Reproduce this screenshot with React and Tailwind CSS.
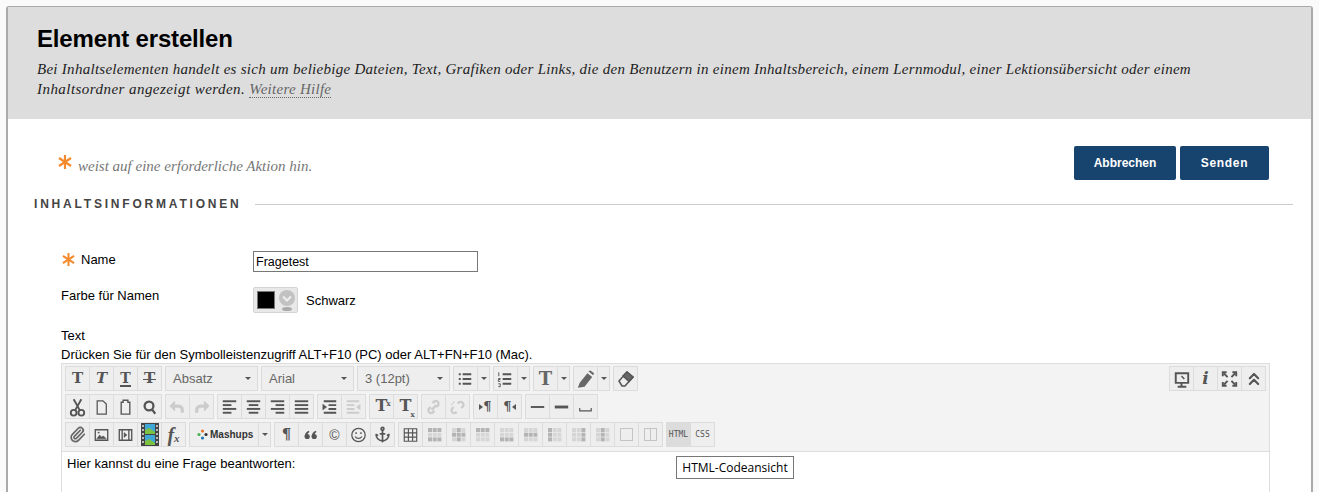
import { Anchor, ChevronsUp, Paperclip } from "lucide-react";

const Svg = ({ children, color = "#555" }) => (
  <svg width="24" height="24" viewBox="0 0 24 24" fill="none" stroke={color} strokeWidth="2">
    {children}
  </svg>
);

const Glyph = ({ children, className = "" }) => (
  <span className={`font-['DejaVu_Serif',serif] font-bold leading-none text-[#555] ${className}`}>{children}</span>
);

const Btn = ({ children, active }) => (
  <div className={`flex h-[23px] w-6 shrink-0 items-center justify-center overflow-hidden border-r border-[#dcdcdc] last:w-[23px] last:border-r-0 ${active ? "bg-[#dcdcdc]" : ""}`}>
    {children}
  </div>
);

const Group = ({ children, className = "" }) => (
  <div className={`flex h-[25px] shrink-0 border border-[#dcdcdc] bg-[#eeeeee] ${className}`}>{children}</div>
);

const Caret = () => <span className="h-0 w-0 border-x-[3px] border-t-[3px] border-x-transparent border-t-[#555]" />;

const CaretBtn = () => (
  <div className="flex w-[11px] items-center justify-center"><Caret /></div>
);

const Select = ({ label }) => (
  <div className="flex h-[25px] w-[93px] shrink-0 items-center justify-between border border-[#dcdcdc] bg-[#eeeeee] pl-[7px] pr-[6px] text-[13px] text-[#666]">
    <span>{label}</span>
    <Caret />
  </div>
);

const Lines = ({ rows, color = "#555" }) => (
  <Svg color={color}>
    {rows.map(([x1, x2, y]) => (
      <line key={y} x1={x1} x2={x2} y1={y} y2={y} />
    ))}
  </Svg>
);

const Star = ({ size }) => (
  <svg width={size} height={size} viewBox="0 0 14 14" stroke="#f58a2c" strokeWidth="2.2" className="shrink-0">
    <line x1="7" y1="0" x2="7" y2="14" />
    <line x1="1" y1="3" x2="13" y2="11" />
    <line x1="13" y1="3" x2="1" y2="11" />
  </svg>
);

const tableVariants = [
  [[0, 0], [0, 1], [0, 2], [2, 0], [2, 1], [2, 2]],
  [[1, 0], [1, 1], [1, 2], [0, 1], [2, 1]],
  [[0, 0], [0, 1], [0, 2]],
  [[2, 0], [2, 1], [2, 2]],
  [[1, 0], [1, 1], [1, 2]],
  [[0, 0], [1, 0], [2, 0]],
  [[0, 2], [1, 2], [2, 2]],
  [[0, 1], [1, 1], [2, 1]],
];

const TableCells = ({ dark }) => (
  <svg width="14" height="14" viewBox="0 0 14 14">
    {[0, 1, 2].map((r) =>
      [0, 1, 2].map((c) => (
        <rect
          key={`${r}${c}`}
          x={c * 4.7}
          y={r * 4.7}
          width="4"
          height="4"
          fill={dark.some(([a, b]) => a === r && b === c) ? "#b4b4b4" : "#d6d6d6"}
        />
      )),
    )}
  </svg>
);

const Toolbar = () => (
  <div className="border border-[#dddddd] bg-[#f3f3f3] pb-1 pl-[3px] pr-[3px] pt-[2px]">
    <div className="flex gap-[3px]">
      <Group>
        <Btn><Glyph className="text-[15px]">T</Glyph></Btn>
        <Btn><Glyph className="text-[15px] italic">T</Glyph></Btn>
        <Btn><Glyph className="border-b-[2px] border-[#555] text-[14px]">T</Glyph></Btn>
        <Btn>
          <span className="relative">
            <Glyph className="text-[15px]">T</Glyph>
            <span className="absolute left-[-1px] right-[-1px] top-[8px] h-px bg-[#555]" />
          </span>
        </Btn>
      </Group>
      <Select label="Absatz" />
      <Select label="Arial" />
      <Select label="3 (12pt)" />
      <Group>
        <Btn>
          <Svg>
            <path d="M9 7h9M9 12h9M9 17h9" />
            <path d="M5 7h2M5 12h2M5 17h2" />
          </Svg>
        </Btn>
        <CaretBtn />
      </Group>
      <Group>
        <Btn>
          <Svg>
            <path d="M9 7h9M9 12h9M9 17h9" />
            <path d="M5 5v4M4.5 11.5h2v1h-2v2h2M4.5 17h2v3h-2" strokeWidth="1" />
          </Svg>
        </Btn>
        <CaretBtn />
      </Group>
      <Group>
        <Btn><Glyph className="text-[18px] text-[#666]">T</Glyph></Btn>
        <CaretBtn />
      </Group>
      <Group>
        <Btn>
          <Svg color="none">
            <path d="M4 21l2-5 8-10 5 4-8 10z" fill="#666" />
            <path d="M15 4l2-1 4 3-1 2z" fill="#666" />
          </Svg>
        </Btn>
        <CaretBtn />
      </Group>
      <Group>
        <Btn>
          <svg width="20" height="20" viewBox="0 0 20 20" fill="none" stroke="#555" strokeWidth="1.5">
            <path d="M3 12l8-9 6 5-8 9H6z" />
            <path d="M11 3l6 5-4 4.5-6-5.5z" fill="#666" />
          </svg>
        </Btn>
      </Group>
      <Group className="ml-auto">
        <Btn>
          <Svg>
            <path d="M6 6h13v10H6z" />
            <path d="M12 16v3M8 20h9" />
            <path d="M12 9l3 3" strokeWidth="1.5" />
          </Svg>
        </Btn>
        <Btn><Glyph className="text-[17px] italic">i</Glyph></Btn>
        <Btn>
          <Svg>
            <path d="M6 6l4 4M18 6l-4 4M6 18l4-4M18 18l-4-4" />
            <path d="M5 9V5h4M15 5h4v4M5 15v4h4M15 19h4v-4" />
          </Svg>
        </Btn>
        <Btn><ChevronsUp size={20} strokeWidth={2.6} color="#555" /></Btn>
      </Group>
    </div>

    <div className="mt-[3px] flex gap-[3px]">
      <Group>
        <Btn>
          <Svg>
            <circle cx="8" cy="18" r="3" />
            <circle cx="16" cy="18" r="3" />
            <path d="M9.5 15.5L16 4M14.5 15.5L8 4" />
          </Svg>
        </Btn>
        <Btn>
          <Svg>
            <path d="M7.5 5.5h6l3.5 3.5v10.5H7.5z" strokeWidth="1.3" />
          </Svg>
        </Btn>
        <Btn>
          <Svg>
            <path d="M7.5 7h2V5h5v2h2v12.5h-9z" strokeWidth="1.4" />
          </Svg>
        </Btn>
        <Btn>
          <Svg>
            <circle cx="11.5" cy="11" r="4.6" strokeWidth="2.4" />
            <path d="M15 15l3 4" strokeWidth="2.4" />
          </Svg>
        </Btn>
      </Group>
      <Group>
        <Btn>
          <Svg color="#cccccc">
            <path d="M8 11h5a4 4 0 0 1 4 4v3" strokeWidth="3.4" />
            <path d="M4 11l5-5v10z" fill="#cccccc" strokeWidth="1" />
          </Svg>
        </Btn>
        <Btn>
          <Svg color="#cccccc">
            <path d="M16 11h-5a4 4 0 0 0-4 4v3" strokeWidth="3.4" />
            <path d="M20 11l-5-5v10z" fill="#cccccc" strokeWidth="1" />
          </Svg>
        </Btn>
      </Group>
      <Group>
        <Btn><Lines rows={[[5, 19, 6], [5, 14, 10], [5, 19, 14], [5, 14, 18]]} /></Btn>
        <Btn><Lines rows={[[5, 19, 6], [7, 17, 10], [5, 19, 14], [7, 17, 18]]} /></Btn>
        <Btn><Lines rows={[[5, 19, 6], [10, 19, 10], [5, 19, 14], [10, 19, 18]]} /></Btn>
        <Btn><Lines rows={[[5, 19, 6], [5, 19, 10], [5, 19, 14], [5, 19, 18]]} /></Btn>
      </Group>
      <Group>
        <Btn>
          <Svg>
            <path d="M6 18h13M11 14h8M11 10h8M6 6h13" />
            <path d="M5 9l4 3-4 3z" fill="#555" strokeWidth="0.5" />
          </Svg>
        </Btn>
        <Btn>
          <Svg color="#cccccc">
            <path d="M5 18h13M5 14h8M5 10h8M5 6h13" />
            <path d="M19 9l-4 3 4 3z" fill="#cccccc" strokeWidth="0.5" />
          </Svg>
        </Btn>
      </Group>
      <Group>
        <Btn>
          <span className="relative">
            <Glyph className="text-[16px]">T</Glyph>
            <span className="absolute left-[11px] top-[-2px] font-['DejaVu_Serif',serif] text-[7px] font-bold text-[#555]">x</span>
          </span>
        </Btn>
        <Btn>
          <span className="relative">
            <Glyph className="text-[16px]">T</Glyph>
            <span className="absolute left-[11px] top-[9px] font-['DejaVu_Serif',serif] text-[7px] font-bold text-[#555]">x</span>
          </span>
        </Btn>
      </Group>
      <Group>
        <Btn>
          <Svg color="#cccccc">
            <path d="M10 15l5-5M9 12l-2 2a3 3 0 0 0 4 4l2-2M15 12l2-2a3 3 0 0 0-4-4l-2 2" strokeWidth="2.4" />
          </Svg>
        </Btn>
        <Btn>
          <Svg color="#cccccc">
            <path d="M8 12l-2 2a3 3 0 0 0 4 4l1-1M16 13l2-2a3 3 0 0 0-4-4l-2 1" strokeWidth="2.4" />
            <path d="M8 6v2M5 9h2" strokeWidth="1.4" />
          </Svg>
        </Btn>
      </Group>
      <Group>
        <Btn>
          <span className="flex items-center">
            <span className="h-0 w-0 border-y-[3px] border-l-[4px] border-y-transparent border-l-[#555]" />
            <Glyph className="text-[13px]">¶</Glyph>
          </span>
        </Btn>
        <Btn>
          <span className="flex items-center">
            <Glyph className="text-[13px]">¶</Glyph>
            <span className="h-0 w-0 border-y-[3px] border-r-[4px] border-y-transparent border-r-[#555]" />
          </span>
        </Btn>
      </Group>
      <Group>
        <Btn><Lines rows={[[5, 19, 12]]} /></Btn>
        <Btn>
          <Svg>
            <line x1="5" x2="19" y1="12" y2="12" strokeWidth="3" />
          </Svg>
        </Btn>
        <Btn>
          <Svg>
            <path d="M6 13v3h12v-3" strokeWidth="1.2" />
          </Svg>
        </Btn>
      </Group>
    </div>

    <div className="mt-[3px] flex gap-[3px]">
      <Group>
        <Btn><Paperclip size={17} strokeWidth={2.4} color="#666" /></Btn>
        <Btn>
          <Svg>
            <path d="M5.5 6.5h13v11h-13z" strokeWidth="1.4" />
            <path d="M7 16l3-4 2 2 2-1 3 3z" fill="#555" strokeWidth="0.5" />
            <circle cx="9" cy="9.5" r="1" fill="#555" stroke="none" />
          </Svg>
        </Btn>
        <Btn>
          <Svg>
            <path d="M5.5 6.5h13v11h-13zM8.5 6.5v11M15.5 6.5v11" strokeWidth="1.4" />
            <path d="M10.5 9.5l3 2.5-3 2.5z" fill="#555" strokeWidth="0.5" />
          </Svg>
        </Btn>
        <Btn>
          <svg width="18" height="23" viewBox="0 0 18 23">
            <rect width="18" height="23" fill="#444444" />
            <path d="M1 2h2v2H1zM1 6h2v2H1zM1 10h2v2H1zM1 14h2v2H1zM1 18h2v2H1zM15 2h2v2h-2zM15 6h2v2h-2zM15 10h2v2h-2zM15 14h2v2h-2zM15 18h2v2h-2z" fill="#bbbbbb" />
            <rect x="4" y="1" width="10" height="10" fill="#3fa7d6" />
            <rect x="4" y="12" width="10" height="10" fill="#3fa7d6" />
            <path d="M4 11V7l4-2 6 4v2zM4 22v-4l4-2 6 4v2z" fill="#7cc142" />
          </svg>
        </Btn>
        <Btn>
          <span className="font-['Liberation_Serif',serif] text-[20px] font-bold italic leading-none text-[#555]">
            f<span className="text-[11px]">x</span>
          </span>
        </Btn>
      </Group>
      <Group>
        <div className="flex w-[69px] items-center gap-[2px] border-r border-[#dcdcdc] pl-[7px] text-[10px] font-bold text-[#333]">
          <svg width="11" height="11" viewBox="0 0 11 11">
            <circle cx="5.5" cy="2" r="1.6" fill="#e8772e" />
            <circle cx="2" cy="5.5" r="1.6" fill="#4caf50" />
            <circle cx="9" cy="5.5" r="1.6" fill="#333" />
            <circle cx="5.5" cy="9" r="1.6" fill="#1f77b4" />
          </svg>
          Mashups
        </div>
        <CaretBtn />
      </Group>
      <Group>
        <Btn><Glyph className="text-[15px]">¶</Glyph></Btn>
        <Btn>
          <svg width="14" height="10" viewBox="0 0 14 10" fill="#555">
            <circle cx="3.2" cy="6.5" r="2.6" />
            <circle cx="10.2" cy="6.5" r="2.6" />
            <path d="M0.6 6.5C0.8 3.5 2.5 1.5 5 0.8L5.4 2C4 2.8 3.4 4 3.4 6zM7.6 6.5C7.8 3.5 9.5 1.5 12 0.8L12.4 2C11 2.8 10.4 4 10.4 6z" />
          </svg>
        </Btn>
        <Btn><span className="text-[14px] leading-none text-[#555]">©</span></Btn>
        <Btn>
          <Svg>
            <circle cx="12" cy="12" r="7" strokeWidth="1.3" />
            <circle cx="9.5" cy="10" r="1" fill="#555" stroke="none" />
            <circle cx="14.5" cy="10" r="1" fill="#555" stroke="none" />
            <path d="M8.5 13.5a4 4 0 0 0 7 0" strokeWidth="1.3" />
          </Svg>
        </Btn>
        <Btn><Anchor size={17} strokeWidth={2.4} color="#555" /></Btn>
      </Group>
      <Group>
        <Btn>
          <Svg>
            <path d="M5.5 5.5h13v13h-13zM5.5 9.8h13M5.5 14.2h13M9.8 5.5v13M14.2 5.5v13" strokeWidth="1.2" />
          </Svg>
        </Btn>
        {tableVariants.map((dark, i) => (
          <Btn key={i}><TableCells dark={dark} /></Btn>
        ))}
        <Btn>
          <span className="h-[13px] w-[13px] border border-[#c4c4c4]" />
        </Btn>
        <Btn>
          <span className="flex h-[13px] w-[13px] border border-[#c4c4c4]">
            <span className="w-1/2 border-r border-[#c4c4c4]" />
          </span>
        </Btn>
      </Group>
      <Group>
        <Btn active>
          <span className="font-['DejaVu_Sans_Mono',monospace] text-[8px] text-[#555]">HTML</span>
        </Btn>
        <Btn>
          <span className="font-['DejaVu_Sans_Mono',monospace] text-[8px] text-[#555]">CSS</span>
        </Btn>
      </Group>
    </div>
  </div>
);

export default function App() {
  return (
    <div className="h-[492px] overflow-hidden bg-[#fafafa] bg-[radial-gradient(#f1f1f1_2px,transparent_2px)] bg-[size:22px_22px] px-[6px] pt-[6px] font-['Liberation_Sans',Arial,sans-serif] text-[13px] leading-4 text-black">
      <div className="h-[486px] overflow-hidden rounded-t-[3px] border-x-2 border-t border-[#aaaaaa] bg-white">
        <div className="h-[112px] bg-[#dddddd] pl-[29px] pt-[18px]">
          <h1 className="text-[24px] font-bold leading-7 tracking-[-0.18px] text-black">Element erstellen</h1>
          <p className="mt-[6px] font-['Liberation_Serif',serif] text-[15px] italic leading-5 tracking-[0.275px] text-[#222]">
            Bei Inhaltselementen handelt es sich um beliebige Dateien, Text, Grafiken oder Links, die den Benutzern in einem Inhaltsbereich, einem Lernmodul, einer Lektionsübersicht oder einem
            <br />
            <span className="tracking-[0.45px]">Inhaltsordner angezeigt werden.</span>{" "}
            <span className="border-b border-dotted border-[#666] text-[#666]">Weitere Hilfe</span>
          </p>
        </div>

        <div className="flex items-start justify-between pl-[50px] pr-[42px] pt-[27px]">
          <div className="flex items-start gap-[6px] pt-[9px]">
            <Star size={14} />
            <span className="pt-px font-['Liberation_Serif',serif] text-[15px] italic leading-5 text-[#777]">
              weist auf eine erforderliche Aktion hin.
            </span>
          </div>
          <div className="flex gap-1">
            <button className="h-[34px] w-[102px] rounded-[2px] bg-[#17436f] text-[12px] font-bold text-white">Abbrechen</button>
            <button className="h-[34px] w-[89px] rounded-[2px] bg-[#17436f] text-[12px] font-bold tracking-[0.7px] text-white">Senden</button>
          </div>
        </div>

        <div className="mt-4 flex h-4 items-center gap-[13px] pl-[26px] pr-[18px]">
          <span className="text-[12px] font-bold tracking-[2.8px] text-[#444]">INHALTSINFORMATIONEN</span>
          <span className="h-px flex-1 bg-[#cccccc]" />
        </div>

        <div className="pl-[53px] pr-[41px]">
          <div className="mt-[39px] flex">
            <div className="flex w-[192px] items-start gap-[6px] pt-px">
              <span className="pl-[1px] pt-px"><Star size={13} /></span>
              <span>Name</span>
            </div>
            <div className="flex h-[21px] w-[225px] items-center border border-[#777] px-[2px] text-[12.5px]">Fragetest</div>
          </div>

          <div className="mt-[15px] flex">
            <div className="w-[192px] pt-px">Farbe für Namen</div>
            <div className="flex items-center gap-2">
              <div className="flex h-[26px] w-[45px] items-center gap-[3px] rounded-[2px] border border-[#d4d4d4] bg-[#e8e8e8] pl-[3px]">
                <span className="h-[18px] w-[18px] border border-[#777] bg-black" />
                <svg width="18" height="22" viewBox="0 0 18 22">
                  <circle cx="9" cy="9" r="8" fill="#c2c2c2" />
                  <path d="M5 7.5l4 4 4-4" fill="none" stroke="#eeeeee" strokeWidth="2" />
                  <ellipse cx="9" cy="20" rx="5" ry="2" fill="#aaaaaa" />
                </svg>
              </div>
              <span className="pt-px">Schwarz</span>
            </div>
          </div>

          <div className="mt-[15px]">Text</div>
          <div className="mt-[3px]">Drücken Sie für den Symbolleistenzugriff ALT+F10 (PC) oder ALT+FN+F10 (Mac).</div>

          <div className="relative">
            <Toolbar />
            <div className="h-[60px] border-x border-[#dddddd] px-[5px] pt-1 text-black">Hier kannst du eine Frage beantworten:</div>
            <div className="absolute left-[615px] top-[93px] flex h-[23px] w-[118px] items-center justify-center border border-[#777] bg-white font-['Open_Sans',sans-serif] text-[12px] text-black">
              HTML-Codeansicht
            </div>
          </div>
        </div>
      </div>
    </div>
  );
}
